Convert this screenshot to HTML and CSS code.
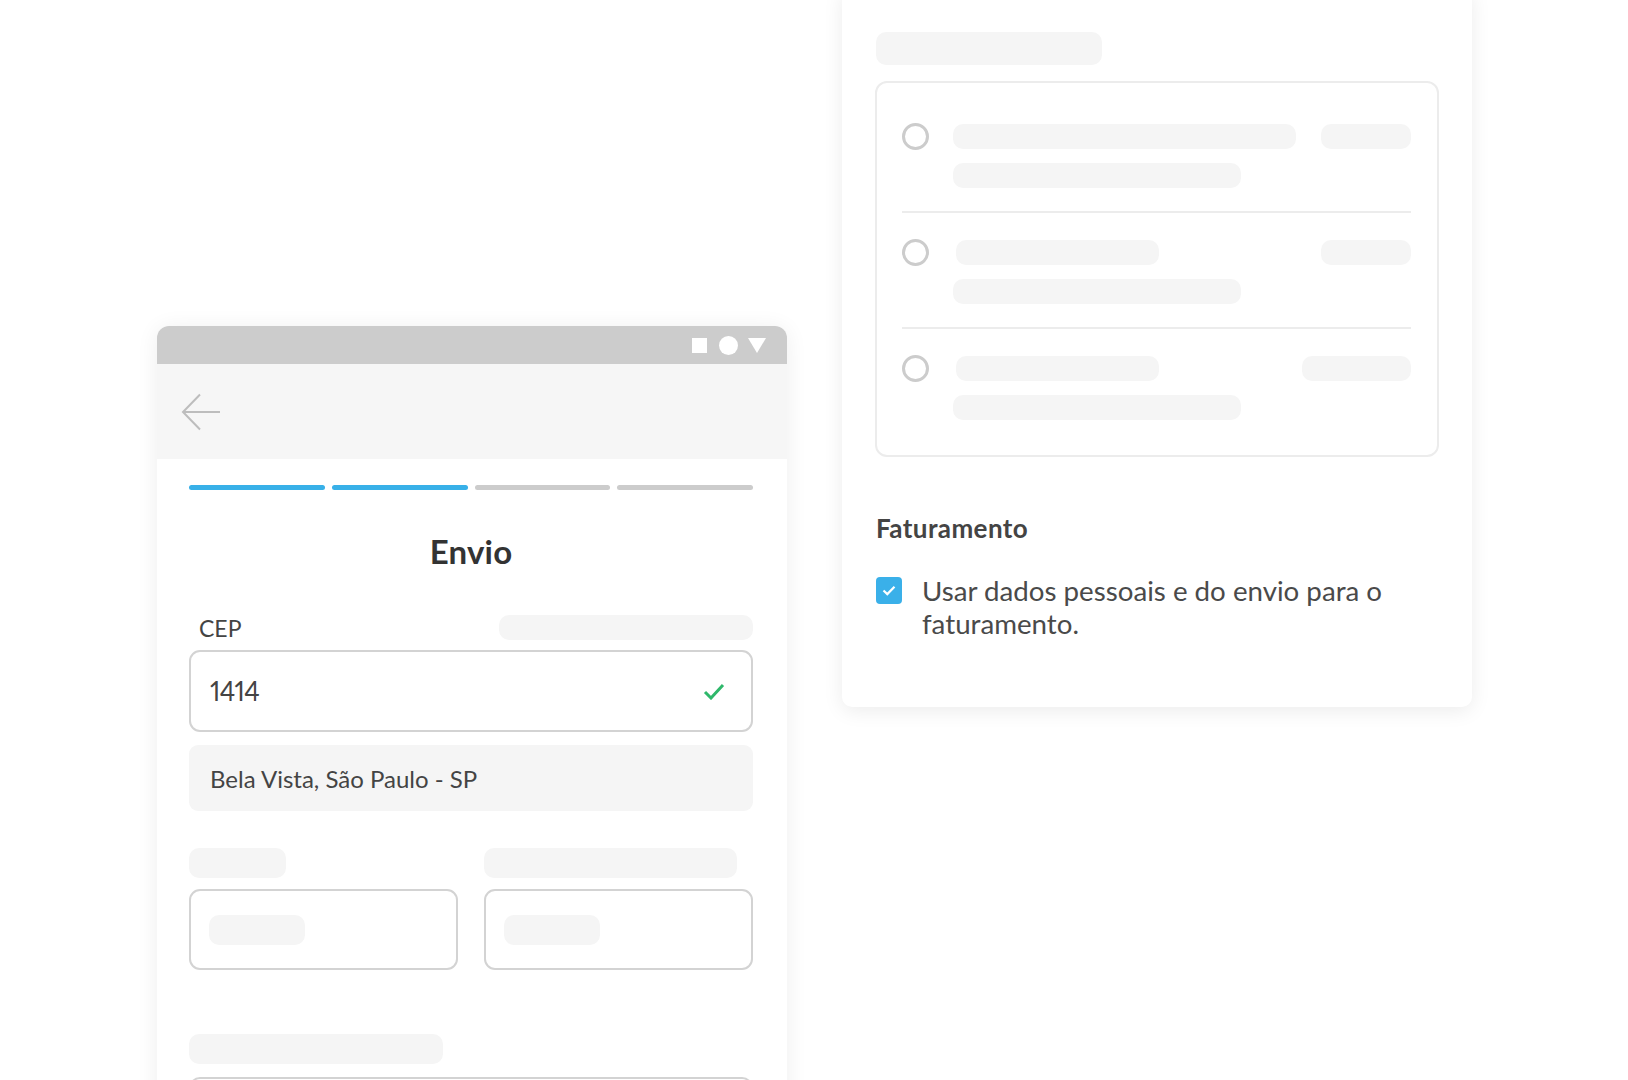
FILE: index.html
```html
<!DOCTYPE html>
<html lang="pt-BR">
<head>
<meta charset="utf-8">
<title>Envio</title>
<link rel="stylesheet" href="styles.css">
</head>
<body>
<div class="stage">
  <div class="phone">
    <div class="statusbar">
      <span class="sb-square"></span>
      <span class="sb-circle"></span>
      <svg class="sb-tri" width="18" height="15" viewBox="0 0 18 15"><polygon points="0,0 18,0 9,15" fill="#fff"/></svg>
    </div>
    <div class="appbar">
      <svg class="back" width="40" height="38" viewBox="0 0 40 38"><path d="M39 19H2M19 1.5L2 19L19 36.5" fill="none" stroke="#bdbdbd" stroke-width="2"/></svg>
    </div>
    <div class="content">
      <div class="progress">
        <span class="seg on"></span><span class="seg on"></span><span class="seg"></span><span class="seg"></span>
      </div>
      <h1 class="title">Envio</h1>
      <div class="field-head">
        <span class="label">CEP</span>
        <span class="skel skel-help"></span>
      </div>
      <div class="input input-cep">
        <span class="value">1414</span>
        <svg class="ok" width="22" height="17" viewBox="0 0 22 17"><path d="M2 9l6 6L20 2" fill="none" stroke="#2fb86b" stroke-width="3"/></svg>
      </div>
      <div class="address">Bela Vista, São Paulo - SP</div>
      <div class="cols">
        <div class="col">
          <span class="skel skel-l1"></span>
          <div class="input input-sm"><span class="skel skel-in"></span></div>
        </div>
        <div class="col">
          <span class="skel skel-l2"></span>
          <div class="input input-sm"><span class="skel skel-in"></span></div>
        </div>
      </div>
      <span class="skel skel-l3"></span>
      <div class="input input-last"></div>
    </div>
  </div>

  <div class="card">
    <span class="skel skel-title"></span>
    <div class="options">
      <div class="opt">
        <span class="radio"></span>
        <div class="opt-body">
          <div class="opt-line"><span class="skel bar-a"></span><span class="skel bar-r"></span></div>
          <span class="skel bar-b"></span>
        </div>
      </div>
      <div class="opt">
        <span class="radio"></span>
        <div class="opt-body">
          <div class="opt-line"><span class="skel bar-c"></span><span class="skel bar-r"></span></div>
          <span class="skel bar-b"></span>
        </div>
      </div>
      <div class="opt">
        <span class="radio"></span>
        <div class="opt-body">
          <div class="opt-line"><span class="skel bar-c"></span><span class="skel bar-r2"></span></div>
          <span class="skel bar-b"></span>
        </div>
      </div>
    </div>
    <h2 class="section">Faturamento</h2>
    <label class="check-row">
      <span class="checkbox"><svg width="14" height="11" viewBox="0 0 14 11"><path d="M1.5 5.5l3.8 3.6L12.5 1.8" fill="none" stroke="#fff" stroke-width="2.2"/></svg></span>
      <span class="check-text">Usar dados pessoais e do envio para o faturamento.</span>
    </label>
  </div>
</div>
</body>
</html>
```

FILE: styles.css
```css
* { box-sizing: border-box; }
body { margin: 0; background: #fff; font-family: "Lato", "Open Sans", sans-serif; color: #444; }
.stage { position: relative; width: 1628px; height: 1080px; overflow: hidden; background: #fff; }

.phone {
  position: absolute; left: 157px; top: 326px; width: 630px; height: 820px;
  background: #fff; border-radius: 12px 12px 0 0;
  box-shadow: 0 2px 22px rgba(0,0,0,0.07);
}
.statusbar {
  height: 38px; background: #cccccc; border-radius: 12px 12px 0 0;
  display: flex; justify-content: flex-end; align-items: center; padding: 1px 21px 0 0;
}
.sb-square { width: 15px; height: 15px; background: #fff; margin-right: 12px; }
.sb-circle { width: 19px; height: 19px; background: #fff; border-radius: 50%; margin-right: 10px; }
.sb-tri { display: block; }
.appbar { height: 95px; background: #f6f6f6; display: flex; align-items: center; padding-left: 24px; }
.back { display: block; }

.content { padding: 26px 34px 0 32px; }
.progress { display: flex; gap: 7px; }
.seg { flex: 1; height: 5px; border-radius: 3px; background: #cccccc; }
.seg.on { background: #38b0e8; }
.title { margin: 41px 0 0; text-align: center; font-size: 33px; line-height: 40px; font-weight: 700; color: #333; letter-spacing: 0.2px; }

.skel { display: block; background: #f5f5f5; border-radius: 10px; }
.field-head { display: flex; justify-content: space-between; align-items: center; margin-top: 44px; height: 25px; }
.label { font-size: 23px; color: #444; padding-left: 10px; }
.skel-help { width: 254px; height: 25px; }

.input { border: 2px solid #d3d3d3; border-radius: 11px; background: #fff; }
.input-cep { margin-top: 10px; height: 82px; display: flex; align-items: center; justify-content: space-between; padding: 0 26px 0 19px; }
.value { font-size: 26px; color: #444; font-variant-numeric: proportional-nums; letter-spacing: -0.5px; }
.ok { display: block; }
.address { margin-top: 13px; height: 66px; background: #f5f5f5; border-radius: 9px; display: flex; align-items: center; padding-left: 21px; font-size: 24px; color: #444; }

.cols { display: grid; grid-template-columns: 1fr 1fr; gap: 26px; margin-top: 37px; }
.skel-l1 { width: 97px; height: 30px; }
.skel-l2 { width: 253px; height: 30px; }
.input-sm { margin-top: 11px; height: 81px; display: flex; align-items: center; padding-left: 18px; }
.skel-in { width: 96px; height: 30px; }
.skel-l3 { width: 254px; height: 30px; margin-top: 64px; }
.input-last { margin-top: 13px; height: 82px; }

.card {
  position: absolute; left: 842px; top: -12px; width: 630px; height: 719px;
  background: #fff; border-radius: 10px;
  box-shadow: 0 4px 20px rgba(0,0,0,0.08);
  padding: 44px 33px 0 33px;
}
.skel-title { width: 226px; height: 33px; margin-left: 1px; }
.options { margin-top: 16px; border: 2px solid #ececec; border-radius: 12px; padding: 14px 26px 13px 25px; }
.opt { display: flex; align-items: flex-start; padding: 27px 0 23px; border-bottom: 2px solid #ececec; }
.opt:last-child { border-bottom: 0; padding-bottom: 22px; }
.radio { flex: none; width: 27px; height: 27px; border: 3px solid #cccccc; border-radius: 50%; margin: -1px 24px 0 0; }
.opt-body { flex: 1; }
.opt-line { display: flex; justify-content: space-between; }
.bar-a { width: 343px; height: 25px; }
.bar-c { width: 203px; height: 25px; margin-left: 3px; }
.bar-r { width: 90px; height: 25px; }
.bar-r2 { width: 109px; height: 25px; }
.bar-b { width: 288px; height: 25px; margin-top: 14px; }

.section { margin: 55px 0 0 1px; font-size: 26px; line-height: 32px; font-weight: 700; color: #444; letter-spacing: 0.4px; }
.check-row { display: flex; align-items: flex-start; margin-top: 30px; }
.checkbox { flex: none; width: 26px; height: 27px; border-radius: 4px; background: #3ab0e9; margin: 3px 20px 0 1px; display: flex; align-items: center; justify-content: center; }
.checkbox svg { display: block; }
.check-text { font-size: 27.7px; line-height: 33px; color: #4a4a4a; max-width: 470px; }
```
